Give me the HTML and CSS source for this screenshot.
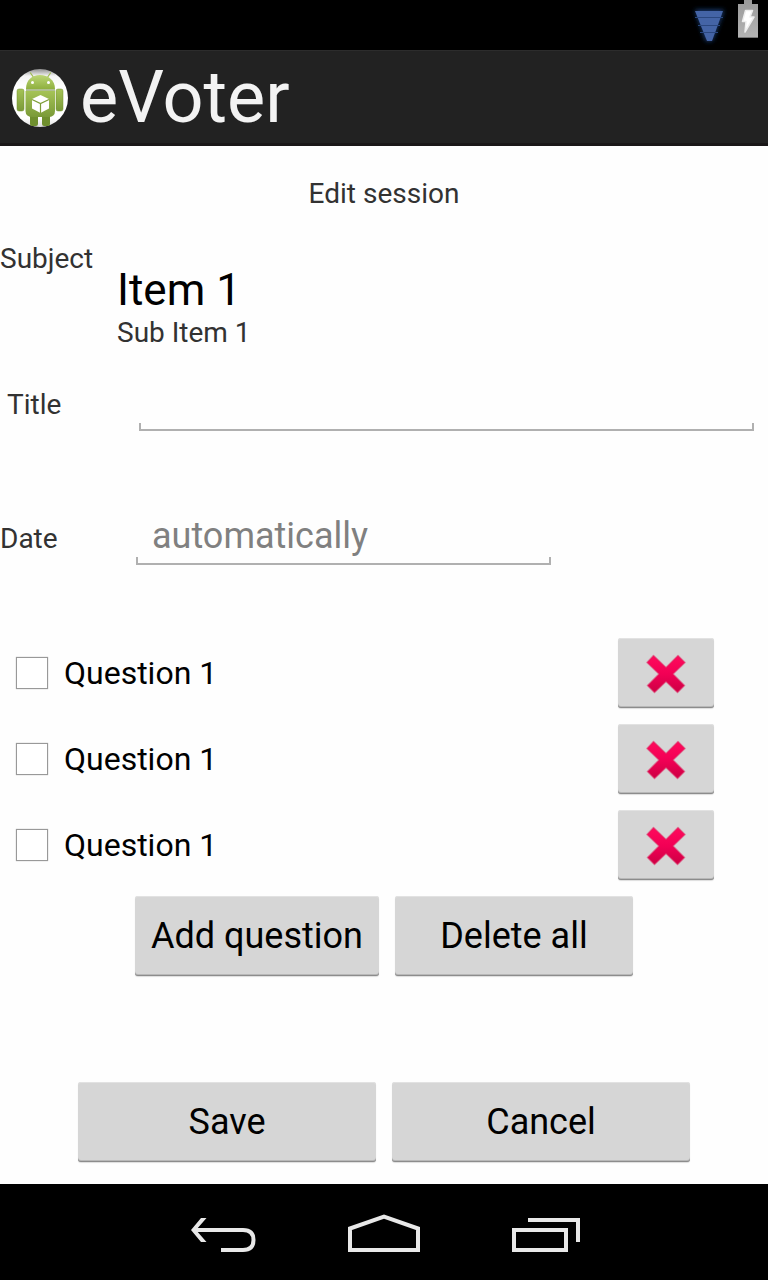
FILE: index.html
```html
<!DOCTYPE html>
<html lang="en">
<head>
<meta charset="utf-8">
<meta name="viewport" content="width=device-width, initial-scale=1">
<title>eVoter</title>
<link rel="stylesheet" href="styles.css">
</head>
<body class="screen">
<svg width="0" height="0" class="defs" aria-hidden="true">
  <defs>
    <linearGradient id="red" x1="0" y1="0" x2="0" y2="1"><stop offset="0" stop-color="#ff0a5c"/><stop offset=".5" stop-color="#f20055"/><stop offset="1" stop-color="#cc0044"/></linearGradient>
    <symbol id="cross" viewBox="0 0 40 40"><path fill="url(#red)" stroke="#e0255f" stroke-opacity=".5" stroke-width="1.600" stroke-linejoin="round" d="M7.500 1.500 20 13.500 32 1.500 39 8.500 27 20 38.500 31.500 31.500 38.500 20 27.500 8.500 38.500 1.500 31.500 13 20 1 8.500Z"/></symbol>
  </defs>
</svg>
<div class="status">
  <svg width="44" height="50" viewBox="0 0 44 50" role="img" aria-label="Wi-Fi signal">
    <defs><filter id="glow" x="-50%" y="-50%" width="200%" height="200%"><feGaussianBlur stdDeviation="2.500"/></filter></defs>
    <path d="M8 10h29L25 41h-6Z" fill="#1d4280" filter="url(#glow)"/>
    <path d="M8 11h28L25 41h-5Z" fill="#4464a6"/>
    <path d="M8 17.500h28M11 25.500h22M13 32.500h18" stroke="#2a477f" stroke-width="1.200"/>
  </svg>
  <svg width="20" height="50" viewBox="0 0 20 50" role="img" aria-label="Battery charging">
    <defs><linearGradient id="bat" x1="0" y1="0" x2="0" y2="1"><stop offset="0" stop-color="#9a9a9a"/><stop offset="1" stop-color="#b4b4b4"/></linearGradient></defs>
    <path d="M6 0h8v4h6v34H0V4h6Z" fill="url(#bat)"/><path d="M0 37.500h20" stroke="#777"/>
    <path d="M7.500 10.500h7l-2.500 6.500h4L7 32l1-10.500H4.500Z" fill="#fff" stroke="#eee" stroke-width="1.500" stroke-linejoin="round"/>
  </svg>
</div>
<header class="bar">
  <svg class="logo" width="56" height="60" viewBox="0 0 56 60" aria-hidden="true">
    <defs>
      <linearGradient id="disc" x1="0" y1="0" x2="0" y2="1"><stop offset="0" stop-color="#8e8e8e"/><stop offset=".12" stop-color="#f4f4f4"/><stop offset=".3" stop-color="#fff"/><stop offset=".85" stop-color="#fff"/><stop offset="1" stop-color="#ddd"/></linearGradient>
      <linearGradient id="green" x1="0" y1="0" x2="0" y2="1"><stop offset="0" stop-color="#a5c356"/><stop offset="1" stop-color="#7a9a38"/></linearGradient>
      <linearGradient id="head" x1="0" y1="0" x2="0" y2="1"><stop offset="0" stop-color="#bcd676"/><stop offset="1" stop-color="#8fb03f"/></linearGradient>
    </defs>
    <ellipse cx="28" cy="30" rx="28" ry="29" fill="url(#disc)"/>
    <path d="m18.500 5 3.500 5M38.500 5 35 10" stroke="#9dbb50" stroke-width="1.200" stroke-linecap="round"/>
    <path d="M18 46h8v10q0 2-2 2h-4q-2 0-2-2ZM30 46h8v10q0 2-2 2h-4q-2 0-2-2Z" fill="#6f8f2e"/>
    <rect x="5" y="21" width="7" height="22" rx="2" fill="url(#green)" stroke="#71912f" stroke-width=".5"/>
    <rect x="44" y="21" width="7" height="22" rx="2" fill="url(#green)" stroke="#71912f" stroke-width=".5"/>
    <path d="M14 21C14 12 20 7 28 7s15 5 15 14Z" fill="url(#head)"/>
    <path d="M13.500 23H43v20q0 6-7 6H21q-7.500 0-7.500-6Z" fill="url(#green)"/>
    <path d="M14 22h29" stroke="#617f27"/>
    <circle cx="20.500" cy="14.500" r="1.500" fill="#fff"/><circle cx="36.500" cy="14.500" r="1.500" fill="#fff"/>
    <path d="m28.500 27 8.500 4v9.500L28.500 45 20 40.500V31Z" fill="#fff"/>
    <path d="m20 31.500 8.500 4 8.500-4M28.500 35.500V45" stroke="#7d9d36" stroke-width="1.200" fill="none"/>
  </svg>
  <h1 class="app-title">eVoter</h1>
</header>
<main class="content">
  <h2 class="heading">Edit session</h2>
  <section class="subject">
    <span class="label">Subject</span>
    <div class="item">
      <div class="item-title">Item 1</div>
      <div class="label">Sub Item 1</div>
    </div>
  </section>
  <form class="form">
    <div class="field field-title">
      <label class="label" for="title">Title</label>
      <input class="input" id="title" type="text">
    </div>
    <div class="field field-date">
      <label class="label" for="date">Date</label>
      <input class="input" id="date" type="text" placeholder="automatically">
    </div>
    <ul class="questions">
      <li class="question">
        <label class="check"><input class="box" type="checkbox">Question 1</label>
        <button class="btn remove" type="button" aria-label="Remove question"><svg width="40" height="40" aria-hidden="true"><use href="#cross"/></svg></button>
      </li>
      <li class="question">
        <label class="check"><input class="box" type="checkbox">Question 1</label>
        <button class="btn remove" type="button" aria-label="Remove question"><svg width="40" height="40" aria-hidden="true"><use href="#cross"/></svg></button>
      </li>
      <li class="question">
        <label class="check"><input class="box" type="checkbox">Question 1</label>
        <button class="btn remove" type="button" aria-label="Remove question"><svg width="40" height="40" aria-hidden="true"><use href="#cross"/></svg></button>
      </li>
    </ul>
    <div class="actions">
      <button class="btn" type="button">Add question</button>
      <button class="btn wide" type="button">Delete all</button>
    </div>
    <div class="actions submit">
      <button class="btn" type="submit">Save</button>
      <button class="btn" type="button">Cancel</button>
    </div>
  </form>
</main>
<nav class="nav">
  <button class="nav-btn" type="button" aria-label="Back"><svg width="72" height="40" viewBox="0 0 72 40"><path d="M11 16h48q10.500 0 10.500 10T59 36H37" fill="none" stroke="#e8e8e8" stroke-width="4"/><path d="M17 4h5.500L12 16l10.500 12H17L7 16Z" fill="#e8e8e8"/></svg></button>
  <button class="nav-btn" type="button" aria-label="Home"><svg width="72" height="40" viewBox="0 0 72 40"><path d="M2 36V14.500L36 2.500l34 12V36Z" fill="none" stroke="#e8e8e8" stroke-width="4"/></svg></button>
  <button class="nav-btn" type="button" aria-label="Recent apps"><svg width="72" height="40" viewBox="0 0 72 40"><path d="M2 16h52v20H2ZM16 6h50v22" fill="none" stroke="#e8e8e8" stroke-width="4"/></svg></button>
</nav>
</body>
</html>
```
FILE: styles.css
```css
* {
  box-sizing: border-box;
}

.screen {
  margin: 0;
  min-height: 100vh;
  display: flex;
  flex-direction: column;
  background: #fefefe;
  color: #000;
  font-family: Roboto, "Noto Sans", sans-serif;
}

.defs {
  position: absolute;
}

.status {
  height: 50px;
  display: flex;
  justify-content: flex-end;
  gap: 7px;
  padding-right: 10px;
  background: #000;
}

.bar {
  height: 96px;
  display: flex;
  align-items: center;
  gap: 12px;
  padding: 2px 12px 0;
  background: #222;
  border-top: 1px solid #2c2c2c;
  border-bottom: 3px solid #1a1718;
}

.app-title {
  margin: 0;
  font-size: 72px;
  line-height: 90px;
  font-weight: 400;
  color: #f3f3f3;
}

.content {
  flex: 1;
  padding-top: 32px;
}

.heading,
.label {
  margin: 0;
  font-size: 28px;
  line-height: 32px;
  font-weight: 400;
  color: #323232;
}

.heading {
  text-align: center;
}

.subject {
  display: grid;
  grid-template-columns: 117px 1fr;
  margin-top: 33px;
}

.item {
  padding-top: 20px;
}

.item-title {
  font-size: 44px;
  line-height: 54px;
}

.form {
  margin: 0;
}

.field {
  display: grid;
  align-items: center;
}

.field .label {
  padding-top: 12px;
}

.field-title {
  grid-template-columns: 132px 1fr;
  margin-top: 18px;
  padding: 0 14px 0 7px;
}

.field-date {
  grid-template-columns: 136px 54%;
  margin-top: 70px;
}

.input {
  width: 100%;
  height: 64px;
  padding: 6px 16px 0;
  border: 0;
  outline: 0;
  font: inherit;
  font-size: 36px;
  background:
    linear-gradient(#b0b0b0, #b0b0b0) left bottom / 100% 2px no-repeat,
    linear-gradient(#b0b0b0, #b0b0b0) left bottom / 2px 8px no-repeat,
    linear-gradient(#b0b0b0, #b0b0b0) right bottom / 2px 8px no-repeat;
}

.input::placeholder {
  color: #808080;
  opacity: 1;
}

.questions {
  list-style: none;
  display: grid;
  gap: 16px;
  margin: 73px 0 0;
  padding: 0 54px 0 16px;
}

.question {
  display: flex;
  align-items: center;
  justify-content: space-between;
}

.check {
  display: flex;
  align-items: center;
  gap: 16px;
  font-size: 32px;
  line-height: 40px;
}

.box {
  appearance: none;
  width: 32px;
  height: 32px;
  margin: 0;
  border: 1px solid #999;
  background: #fff;
  box-shadow: 0 0 1px #aaa;
}

.box:checked {
  background: #33b5e5;
}

.btn {
  height: 80px;
  padding: 0 16px;
  border: 0;
  border-radius: 3px;
  background: #d6d6d6;
  box-shadow: inset 0 -1px #8c8c8c, inset 0 -2px #b8b8b8, inset 0 1px #e2e2e2, 0 1px 1px #ddd;
  font: inherit;
  font-size: 36px;
  color: #000;
}

.remove {
  display: flex;
  align-items: center;
  justify-content: center;
  width: 96px;
  height: 70px;
  padding: 2px 0 0;
}

.actions {
  display: flex;
  justify-content: center;
  gap: 16px;
  margin-top: 16px;
}

.wide {
  min-width: 238px;
}

.submit {
  margin-top: 106px;
  padding: 0 78px 22px;
}

.submit .btn {
  flex: 1;
}

.nav {
  height: 96px;
  display: flex;
  align-items: center;
  justify-content: center;
  gap: 92px;
  padding-top: 4px;
  background: #000;
}

.nav-btn {
  display: flex;
  padding: 0;
  border: 0;
  background: none;
}
```
